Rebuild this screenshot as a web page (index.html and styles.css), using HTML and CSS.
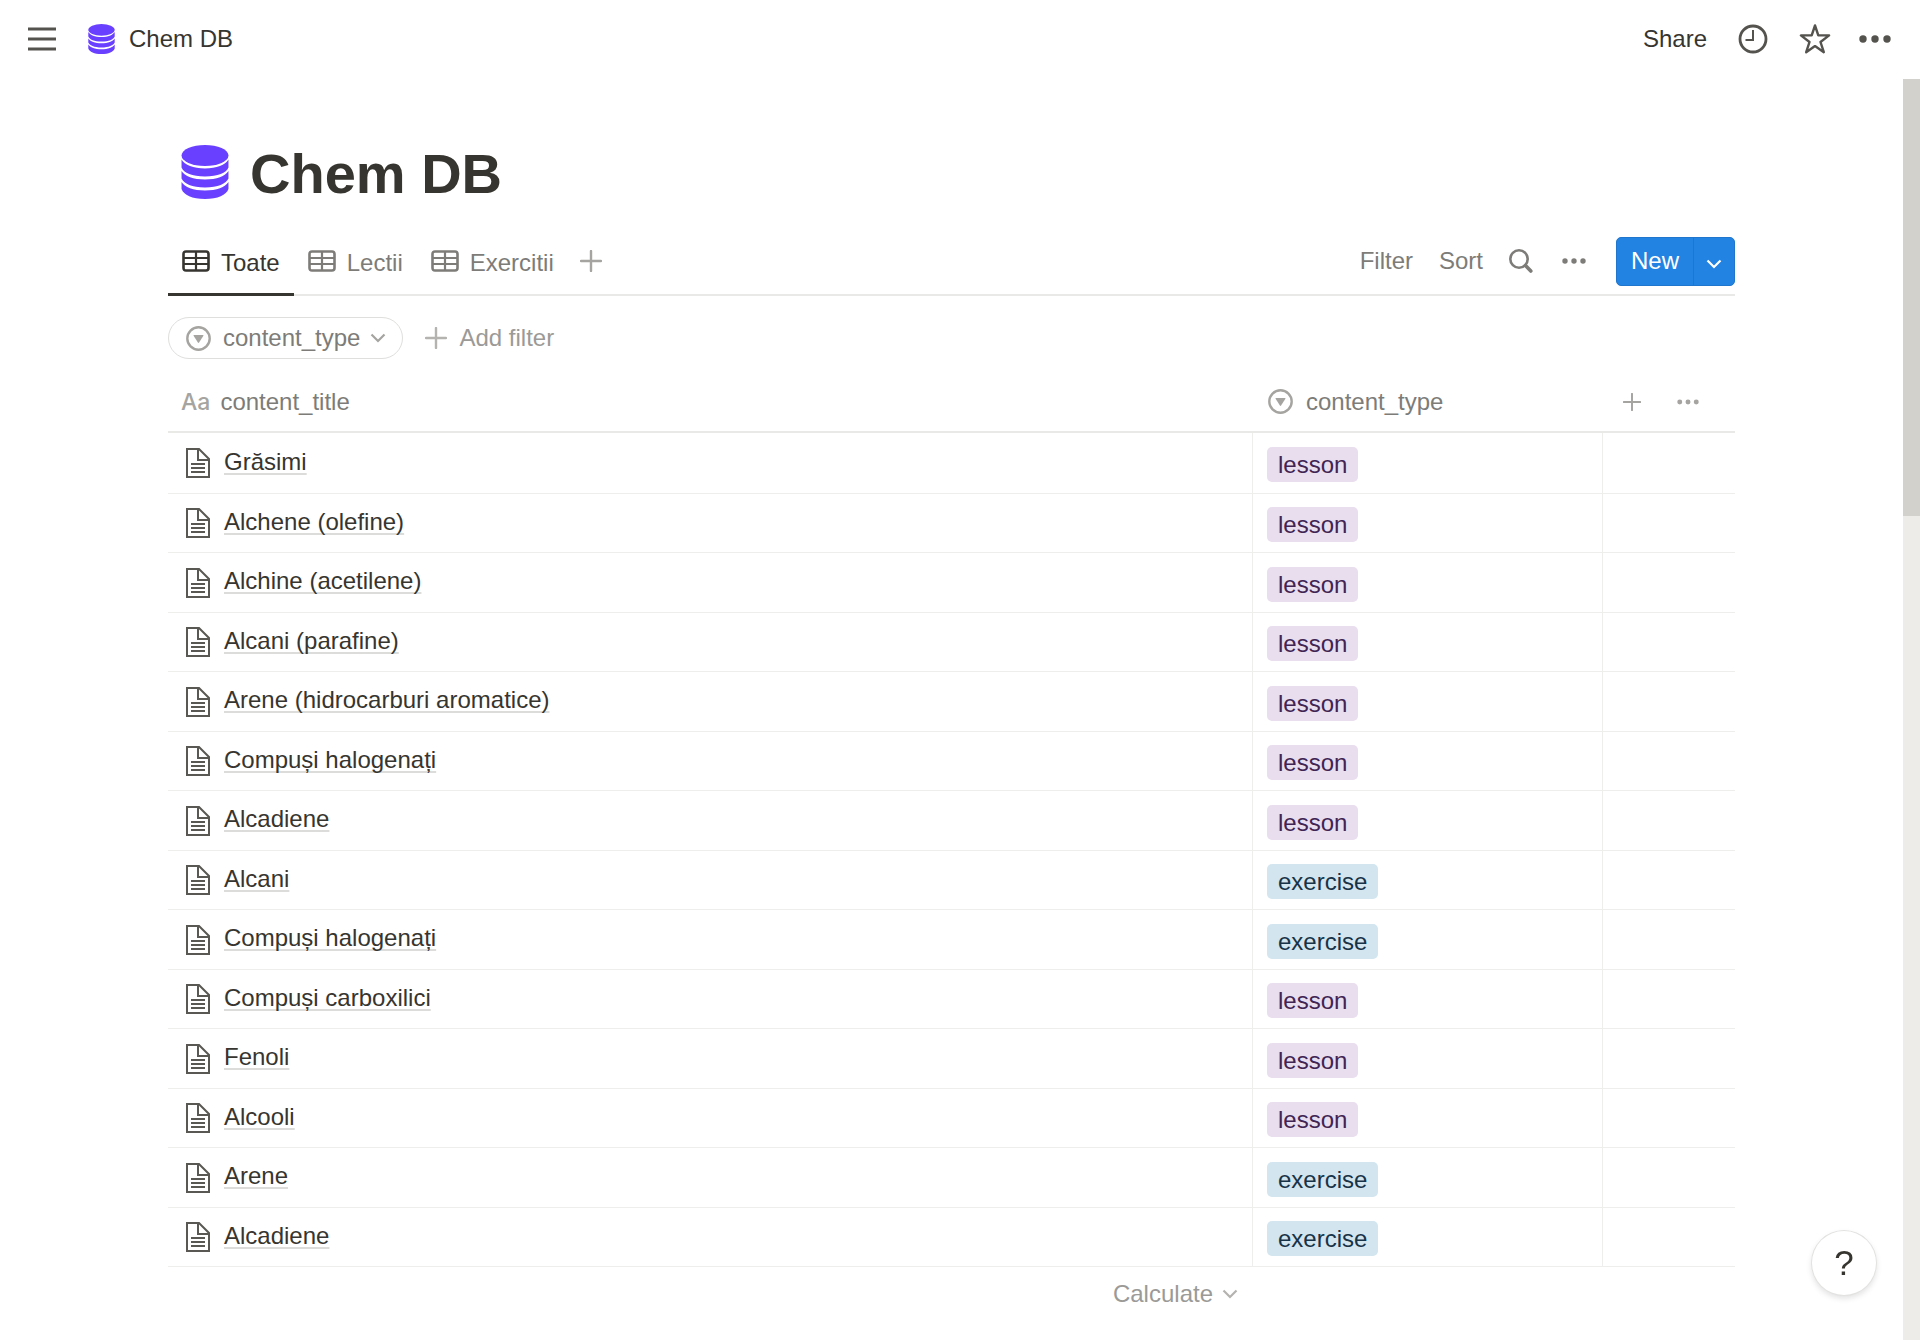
FILE: index.html
```html
<!DOCTYPE html>
<html lang="ro">
<head>
<meta charset="utf-8">
<title>Chem DB</title>
<link rel="stylesheet" href="styles.css">
</head>
<body>
<svg class="sprite" aria-hidden="true">
  <symbol id="i-db" viewBox="1.500 0 45 54" preserveAspectRatio="none">
    <ellipse cx="24" cy="10.500" rx="22" ry="10.500"/>
    <path d="M2 14.500c3 5.500 11 9 22 9s19-3.500 22-9v8c-2 5.500-10 9-22 9s-20-3.500-22-9z"/>
    <path d="M2 26c3 5 11 8.500 22 8.500S43 31 46 26v7.500c-2 5-10 9-22 9s-20-4-22-9z"/>
    <path d="M2 37c3 5 11 8.500 22 8.500S43 42 46 37v7c-2 6-10 10-22 10S4 50 2 44z"/>
  </symbol>
  <symbol id="i-grid" viewBox="0 0 28 22">
    <path d="M4 1.500h20q2.500 0 2.500 2.500v14q0 2.500-2.500 2.500H4q-2.500 0-2.500-2.500V4q0-2.500 2.500-2.500z" fill="none" stroke="currentColor" stroke-width="2.600"/>
    <path d="M14 2v18M2 8h24M2 14h24" fill="none" stroke="currentColor" stroke-width="2.200"/>
  </symbol>
  <symbol id="i-plus" viewBox="0 0 22 22">
    <path d="M11 1v20M1 11h20" fill="none" stroke="currentColor" stroke-width="2.400" stroke-linecap="round"/>
  </symbol>
  <symbol id="i-chevron" viewBox="0 0 16 10">
    <path d="M1.500 1.500L8 8l6.500-6.500" fill="none" stroke="currentColor" stroke-width="2.200"/>
  </symbol>
  <symbol id="i-dots" viewBox="0 0 24 6">
    <circle cx="3" cy="3" r="2.700"/><circle cx="12" cy="3" r="2.700"/><circle cx="21" cy="3" r="2.700"/>
  </symbol>
  <symbol id="i-select" viewBox="0 0 25 25">
    <circle cx="12.500" cy="12.500" r="11.200" fill="none" stroke="currentColor" stroke-width="2.400"/>
    <path d="M8 9h9q.8 0 .4.800L13.100 16.500q-.6.900-1.200 0L7.600 9.800Q7.200 9 8 9z"/>
  </symbol>
  <symbol id="i-page" viewBox="0 0 24 30">
    <path d="M1 1h12l10 10v18H1z M12 1v11h11" fill="none" stroke="currentColor" stroke-width="2"/>
    <path d="M5 16h14M5 20h14M5 24h14" fill="none" stroke="currentColor" stroke-width="2"/>
  </symbol>
</svg>

<header class="topbar">
  <button class="icon-btn" aria-label="Menu">
    <svg width="28" height="24" viewBox="0 0 28 24"><path d="M0 2h28M0 12h28M0 22h28" stroke="currentColor" stroke-width="3"/></svg>
  </button>
  <a class="crumb" href="#"><svg class="db" width="27" height="30"><use href="#i-db"/></svg><span>Chem DB</span></a>
  <div class="topbar-actions">
    <button class="share">Share</button>
    <button class="icon-btn" aria-label="Updates">
      <svg width="30" height="30" viewBox="0 0 30 30"><circle cx="15" cy="15" r="13" fill="none" stroke="currentColor" stroke-width="2.800"/><path d="M15 6v10H7.500" fill="none" stroke="currentColor" stroke-width="2"/></svg>
    </button>
    <button class="icon-btn" aria-label="Favorite">
      <svg width="32" height="32" viewBox="0 0 32 32"><path d="M16 2.500l3.300 9.900h10.800l-8.600 6.600 3.300 10.200L16 23.100l-8.800 6.100 3.300-10.200L1.900 12.400h10.800z" fill="none" stroke="currentColor" stroke-width="2.400" stroke-linejoin="round"/></svg>
    </button>
    <button class="icon-btn" aria-label="More"><svg width="32" height="8" viewBox="0 0 32 8"><circle cx="4" cy="4" r="3.700"/><circle cx="16" cy="4" r="3.700"/><circle cx="28" cy="4" r="3.700"/></svg></button>
  </div>
</header>

<div class="frame">
  <main class="page">
    <div class="title">
      <svg class="db" width="48" height="54"><use href="#i-db"/></svg>
      <h1>Chem DB</h1>
    </div>

    <div class="toolbar">
      <nav class="tabs">
        <a class="tab active" href="#"><svg width="28" height="22"><use href="#i-grid"/></svg><span>Toate</span></a>
        <a class="tab" href="#"><svg width="28" height="22"><use href="#i-grid"/></svg><span>Lectii</span></a>
        <a class="tab" href="#"><svg width="28" height="22"><use href="#i-grid"/></svg><span>Exercitii</span></a>
        <button class="add-view icon-btn" aria-label="Add view"><svg width="22" height="22"><use href="#i-plus"/></svg></button>
      </nav>
      <div class="tools">
        <button>Filter</button>
        <button>Sort</button>
        <button class="icon-btn" aria-label="Search"><svg width="24" height="26" viewBox="0 0 24 26"><circle cx="10" cy="11" r="8.700" fill="none" stroke="currentColor" stroke-width="2.600"/><path d="M16.500 17.500l5.300 5.500" stroke="currentColor" stroke-width="3.600" stroke-linecap="round"/></svg></button>
        <button class="icon-btn" aria-label="View options"><svg width="24" height="6"><use href="#i-dots"/></svg></button>
        <div class="new">
          <button class="new-main">New</button>
          <button class="new-more" aria-label="More new options"><svg width="16" height="10"><use href="#i-chevron"/></svg></button>
        </div>
      </div>
    </div>

    <div class="filters">
      <button class="pill"><svg width="25" height="25"><use href="#i-select"/></svg><span>content_type</span><svg width="16" height="10"><use href="#i-chevron"/></svg></button>
      <button class="add-filter"><svg width="22" height="22"><use href="#i-plus"/></svg><span>Add filter</span></button>
    </div>

    <table class="db-table">
      <colgroup><col><col class="col-type"><col class="col-end"></colgroup>
      <thead>
        <tr>
          <th scope="col"><div class="head"><span class="aa">Aa</span><span>content_title</span></div></th>
          <th scope="col"><div class="head"><svg width="25" height="25"><use href="#i-select"/></svg><span>content_type</span></div></th>
          <td><div class="head head-end"><button class="icon-btn" aria-label="Add column"><svg width="18" height="18"><use href="#i-plus"/></svg></button><button class="icon-btn" aria-label="Column options"><svg width="22" height="6"><use href="#i-dots"/></svg></button></div></td>
        </tr>
      </thead>
      <tbody>
        <tr><td><a class="name" href="#"><svg width="24" height="30"><use href="#i-page"/></svg><span>Grăsimi</span></a></td><td><span class="tag lesson">lesson</span></td><td></td></tr>
        <tr><td><a class="name" href="#"><svg width="24" height="30"><use href="#i-page"/></svg><span>Alchene (olefine)</span></a></td><td><span class="tag lesson">lesson</span></td><td></td></tr>
        <tr><td><a class="name" href="#"><svg width="24" height="30"><use href="#i-page"/></svg><span>Alchine (acetilene)</span></a></td><td><span class="tag lesson">lesson</span></td><td></td></tr>
        <tr><td><a class="name" href="#"><svg width="24" height="30"><use href="#i-page"/></svg><span>Alcani (parafine)</span></a></td><td><span class="tag lesson">lesson</span></td><td></td></tr>
        <tr><td><a class="name" href="#"><svg width="24" height="30"><use href="#i-page"/></svg><span>Arene (hidrocarburi aromatice)</span></a></td><td><span class="tag lesson">lesson</span></td><td></td></tr>
        <tr><td><a class="name" href="#"><svg width="24" height="30"><use href="#i-page"/></svg><span>Compuși halogenați</span></a></td><td><span class="tag lesson">lesson</span></td><td></td></tr>
        <tr><td><a class="name" href="#"><svg width="24" height="30"><use href="#i-page"/></svg><span>Alcadiene</span></a></td><td><span class="tag lesson">lesson</span></td><td></td></tr>
        <tr><td><a class="name" href="#"><svg width="24" height="30"><use href="#i-page"/></svg><span>Alcani</span></a></td><td><span class="tag exercise">exercise</span></td><td></td></tr>
        <tr><td><a class="name" href="#"><svg width="24" height="30"><use href="#i-page"/></svg><span>Compuși halogenați</span></a></td><td><span class="tag exercise">exercise</span></td><td></td></tr>
        <tr><td><a class="name" href="#"><svg width="24" height="30"><use href="#i-page"/></svg><span>Compuși carboxilici</span></a></td><td><span class="tag lesson">lesson</span></td><td></td></tr>
        <tr><td><a class="name" href="#"><svg width="24" height="30"><use href="#i-page"/></svg><span>Fenoli</span></a></td><td><span class="tag lesson">lesson</span></td><td></td></tr>
        <tr><td><a class="name" href="#"><svg width="24" height="30"><use href="#i-page"/></svg><span>Alcooli</span></a></td><td><span class="tag lesson">lesson</span></td><td></td></tr>
        <tr><td><a class="name" href="#"><svg width="24" height="30"><use href="#i-page"/></svg><span>Arene</span></a></td><td><span class="tag exercise">exercise</span></td><td></td></tr>
        <tr><td><a class="name" href="#"><svg width="24" height="30"><use href="#i-page"/></svg><span>Alcadiene</span></a></td><td><span class="tag exercise">exercise</span></td><td></td></tr>
      </tbody>
      <tfoot>
        <tr><td><button class="calculate"><span>Calculate</span><svg width="16" height="10"><use href="#i-chevron"/></svg></button></td><td></td><td></td></tr>
      </tfoot>
    </table>
  </main>
  <div class="scroll-track"><div class="scroll-thumb"></div></div>
</div>

<button class="help" aria-label="Help">?</button>
</body>
</html>
```
FILE: styles.css
```css
* { box-sizing: border-box; }

body {
  margin: 0;
  height: 100vh;
  display: flex;
  flex-direction: column;
  overflow: hidden;
  background: #fff;
  color: #37352f;
  font: 24px/30px "Liberation Sans", Arial, sans-serif;
}

button {
  margin: 0;
  padding: 0;
  border: 0;
  background: none;
  font: inherit;
  color: inherit;
  cursor: pointer;
}

a { color: inherit; text-decoration: none; }
svg { display: block; flex: none; fill: currentColor; }
.sprite { position: absolute; width: 0; height: 0; }
.db { color: #6940ff; }
.icon-btn { display: flex; align-items: center; }

/* Top bar */
.topbar {
  flex: none;
  display: flex;
  align-items: center;
  height: 79px;
  padding: 0 29px 1px 28px;
}
.topbar > .icon-btn,
.topbar-actions .icon-btn { color: #55534e; }
.crumb { display: flex; align-items: center; gap: 14px; margin-left: 32px; }
.topbar-actions { display: flex; align-items: center; margin-left: auto; gap: 31px; }
.topbar-actions .icon-btn:last-child { margin-left: -3px; }

/* Scrolling frame */
.frame { flex: 1; min-height: 0; display: flex; }
.page { flex: 1; min-width: 0; overflow: hidden; padding: 66px 168px 0; }
.scroll-track { flex: none; width: 17px; background: #edece9; }
.scroll-thumb { height: 437px; background: #d3d1cb; }

.title { display: flex; gap: 21px; padding-left: 13px; height: 56px; }
h1 { margin: 0; font-size: 56px; line-height: 58px; font-weight: 700; }

/* Views and tools */
.toolbar {
  display: flex;
  justify-content: space-between;
  height: 69px;
  margin-top: 26px;
  box-shadow: inset 0 -2px #e9e9e7;
}
.tabs { display: flex; gap: 28px; padding-right: 14px; color: #7d7c78; }
.tab { display: flex; align-items: center; gap: 11px; padding-bottom: 1px; }
.tab span { padding-top: 3px; }
.tab.active {
  margin-right: -14px;
  padding-left: 14px;
  padding-right: 14px;
  color: #37352f;
  box-shadow: inset 0 -3px #37352f;
}
.add-view { margin-left: -2px; padding-bottom: 1px; color: #a5a4a0; }
.tools { display: flex; align-items: center; color: #7d7c78; gap: 26px; }
.tools > button { padding-bottom: 2px; }
.tools .icon-btn + .icon-btn { margin-left: 3px; }
.new {
  display: flex;
  width: 119px;
  height: 49px;
  margin-left: 4px;
  border: 1px solid #2076cd;
  border-radius: 5px;
  background: #2383e2;
  color: #fff;
}
.new-main { flex: 1; padding-bottom: 2px; border-right: 1px solid #2076cd; }
.new-more { display: flex; align-items: center; justify-content: center; width: 40px; padding-top: 4px; }

/* Filters */
.filters { display: flex; align-items: center; gap: 22px; margin-top: 21px; }
.pill {
  display: flex;
  align-items: center;
  height: 42px;
  padding: 0 16px 0 17px;
  border: 1px solid #dfdfde;
  border-radius: 21px;
  color: #7d7c78;
}
.pill span { margin: 0 10px 0 12px; }
.pill svg { color: #a5a4a0; }
.add-filter { display: flex; align-items: center; gap: 12px; color: #9b9a97; }
.add-filter svg { color: #b4b3b0; }

/* Table */
.db-table {
  width: 100%;
  margin-top: 15px;
  border-spacing: 0;
  table-layout: fixed;
}
.col-type { width: 350px; }
.col-end { width: 132px; }
th, td { padding: 0; text-align: left; font-weight: 400; }
thead th, thead td { height: 59px; padding-bottom: 2px; border-bottom: 2px solid #e9e9e7; color: #7d7c78; }
.head { display: flex; align-items: center; gap: 13px; padding-left: 15px; }
.head svg { color: #a5a4a0; }
th:first-child .head { gap: 10px; padding-left: 13px; }
.aa { font-family: Inter, sans-serif; font-size: 23px; font-weight: 500; color: #a5a4a0; }
.head-end { gap: 36px; padding-left: 20px; }

tbody td { height: 60px; border-bottom: 1px solid #eeeeec; }
tbody tr:nth-child(even) td { height: 59px; }
tbody tr:first-child td { height: 61px; }
tbody td:not(:last-child) { border-right: 1px solid #eeeeec; }
tbody td:nth-child(2) { padding: 3px 0 0 14px; }
.name { display: flex; align-items: center; gap: 14px; padding-left: 18px; }
.name svg { color: #5a5853; }
.name span {
  padding-bottom: 3px;
  text-decoration: underline 2px #dcdcda;
  text-underline-offset: 3px;
  text-decoration-skip-ink: none;
}
.tag {
  display: block;
  width: max-content;
  padding: 0 11px;
  border-radius: 5px;
  line-height: 35px;
}
.lesson { background: #e8deee; color: #412454; }
.exercise { background: #d3e5ef; color: #183347; }

tfoot td { height: 56px; padding-bottom: 2px; }
.calculate {
  display: flex;
  align-items: center;
  gap: 9px;
  margin-left: auto;
  padding-right: 15px;
  color: #9b9a97;
}
.calculate svg { color: #b4b3b0; }

.help {
  position: fixed;
  right: 44px;
  bottom: 45px;
  width: 64px;
  height: 64px;
  border-radius: 50%;
  background: #fff;
  font-size: 35px;
  box-shadow: 0 0 0 1px #e2e2e1, 0 3px 6px rgba(15, 15, 15, .14);
}
```
